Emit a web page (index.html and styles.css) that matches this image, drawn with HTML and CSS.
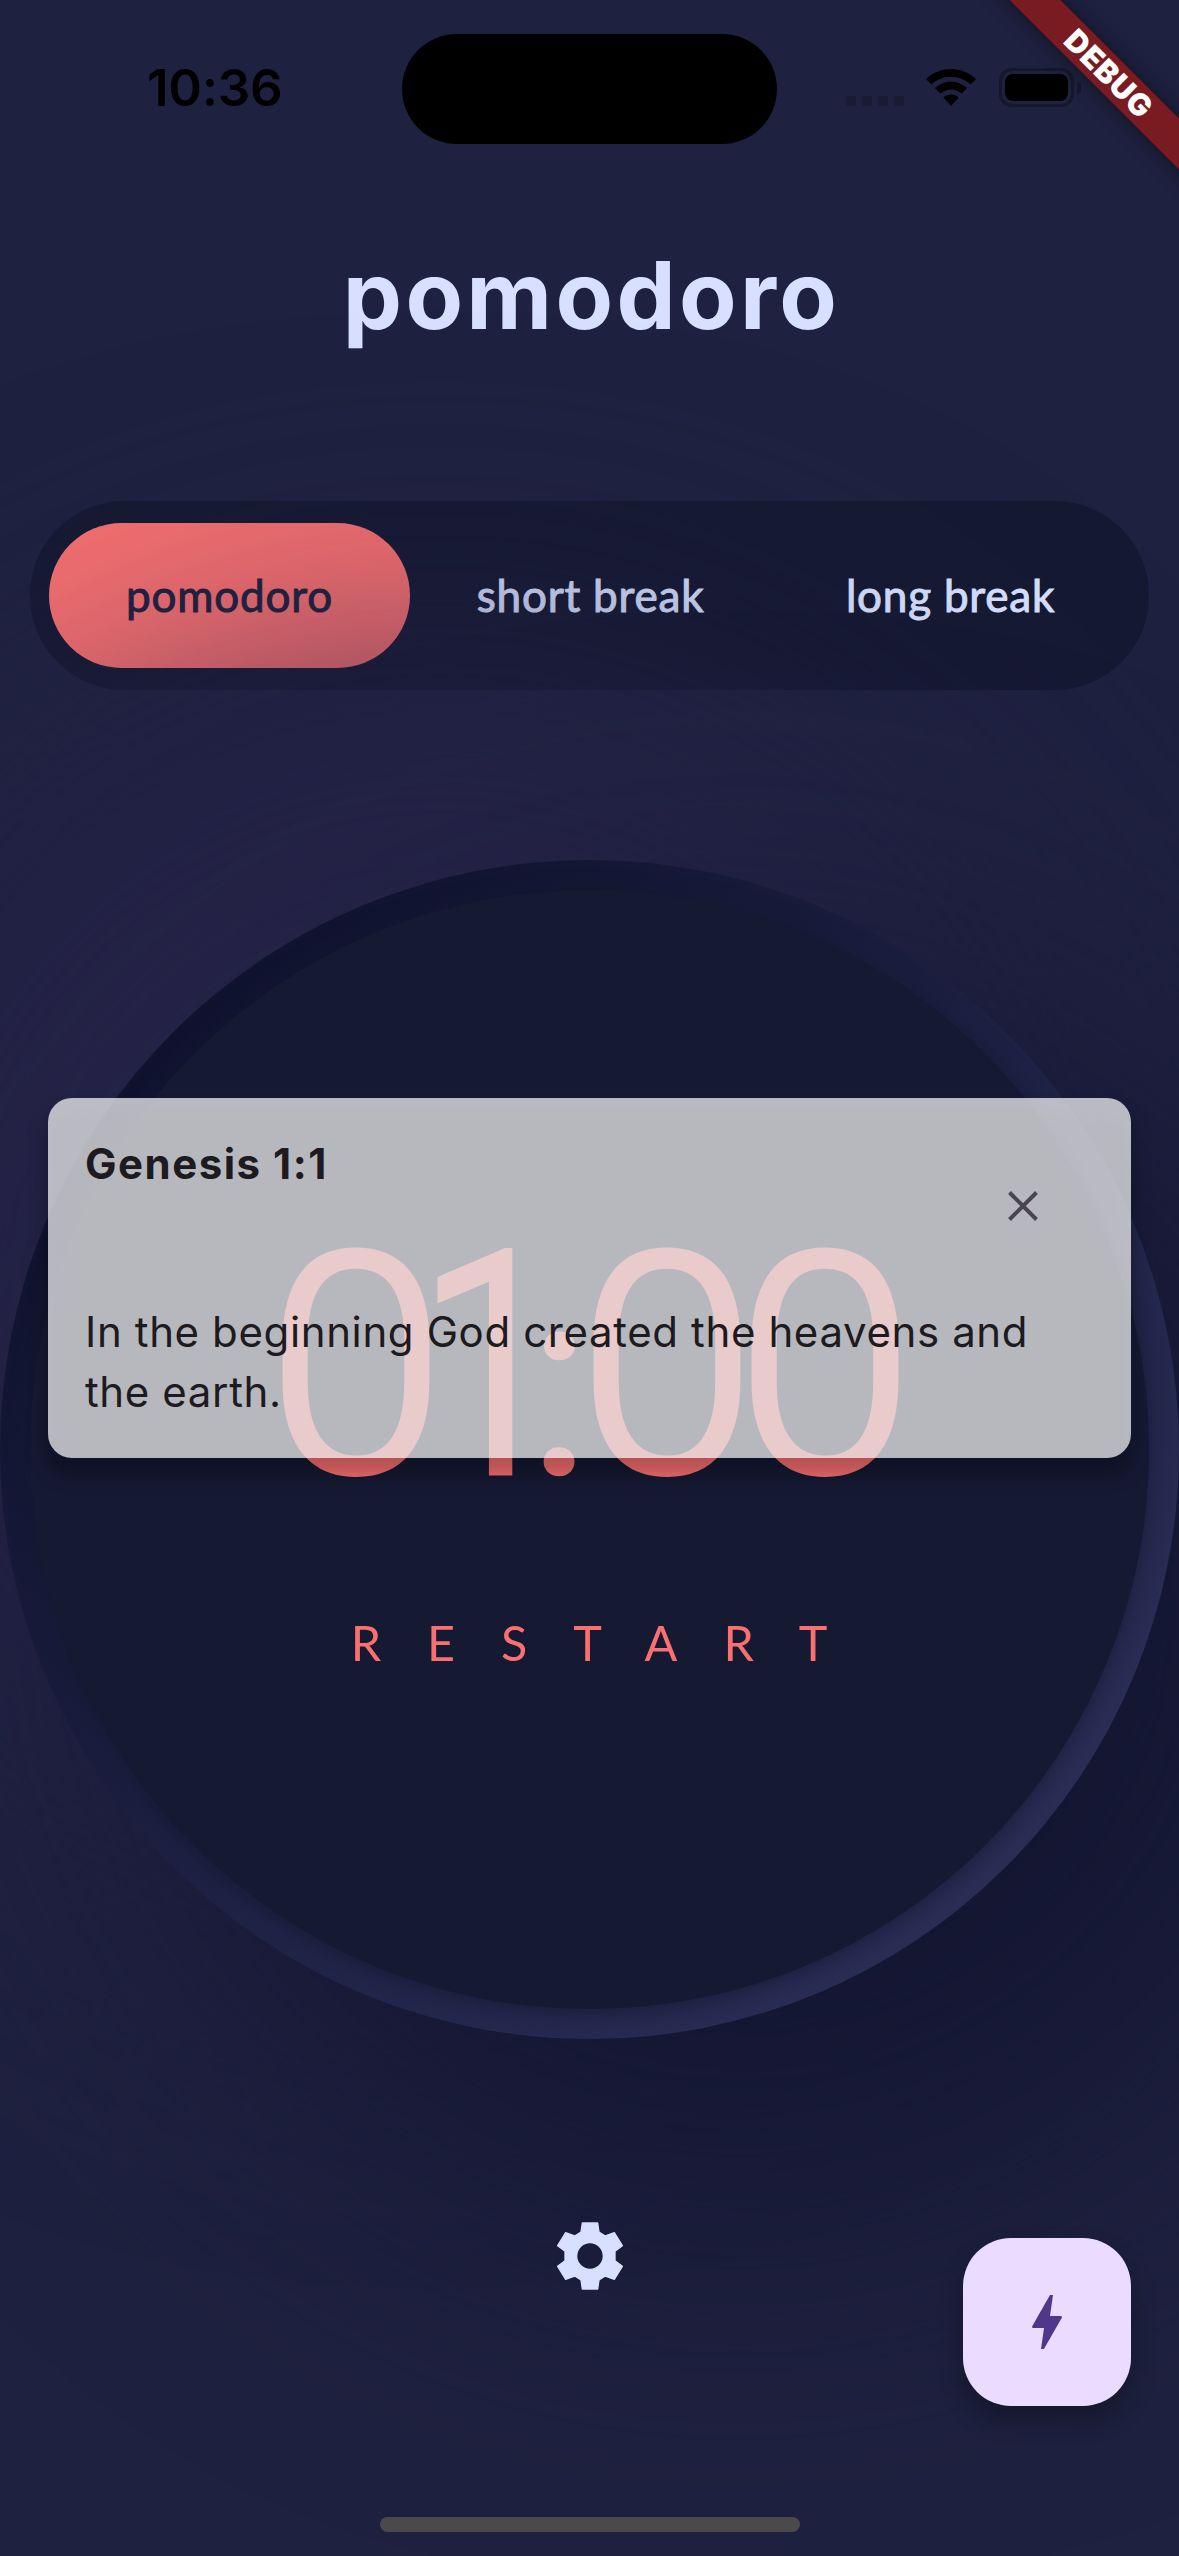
FILE: index.html
```html
<!DOCTYPE html>
<html lang="en">
<head>
<meta charset="utf-8">
<title>pomodoro</title>
<link rel="stylesheet" href="styles.css">
</head>
<body>
<main class="app">
  <header class="status">
    <time class="clock">10:36</time>
    <div class="island"></div>
    <div class="indicators">
      <div class="cell"><i></i><i></i><i></i><i></i></div>
      <svg class="wifi" viewBox="0 0 50 37" width="50" height="37"><path d="M25 0C15.500 0 6.700 3.700 0 10.100L5.400 15.600C10.500 10.800 17.400 7.800 25 7.800S39.500 10.800 44.600 15.600L50 10.100C43.300 3.700 34.500 0 25 0ZM25 12.700C18.800 12.700 13.100 15.200 8.900 19.100L14.300 24.600C17.100 22 20.900 20.400 25 20.400S32.900 22 35.700 24.600L41.100 19.100C36.900 15.200 31.200 12.700 25 12.700ZM25 25.500C22.100 25.500 19.400 26.600 17.400 28.600L25 37L32.600 28.600C30.600 26.600 27.900 25.500 25 25.500Z"/></svg>
      <div class="battery"><div class="level"></div></div><div class="nub"></div>
    </div>
    <div class="ribbon">DEBUG</div>
  </header>

  <h1 class="title">pomodoro</h1>

  <nav class="tabs">
    <button class="tab active">pomodoro</button>
    <button class="tab">short break</button>
    <button class="tab">long break</button>
  </nav>

  <section class="dial">
    <div class="ring">
      <div class="face">
        <div class="time"><span>0</span><span class="one">1</span><span class="colon">:</span><span>0</span><span>0</span></div>
        <div class="restart">RESTART</div>
      </div>
    </div>
  </section>

  <button class="settings" aria-label="Settings">
    <svg viewBox="-102 -102 204 204" width="68" height="68"><path fill-rule="evenodd" d="M-23 -99H23L27 -72L46 -60L73 -70L97 -31L75 -14V14L97 31L73 70L46 60L27 72L23 99H-23L-27 72L-46 60L-73 70L-97 31L-75 14V-14L-97 -31L-73 -70L-46 -60L-27 -72ZM-40 0A40 40 0 1 0 40 0A40 40 0 1 0 -40 0Z"/></svg>
  </button>

  <aside class="verse">
    <div class="verse-head">
      <h2>Genesis 1:1</h2>
      <svg class="close" viewBox="0 0 30 30" width="30" height="30"><path d="M1.500 1.500L28.500 28.500M28.500 1.500L1.500 28.500"/></svg>
    </div>
    <p>In the beginning God created the heavens and the earth.</p>
  </aside>

  <button class="fab" aria-label="New verse">
    <svg viewBox="0 0 24 24" width="72" height="72"><path d="M11 21h-1l1-7H7.500c-.58 0-.57-.32-.38-.66.19-.34.05-.08.07-.12C8.480 10.940 10.420 7.540 13 3h1l-1 7h3.500c.49 0 .56.33.47.51l-.07.15C12.960 17.550 11 21 11 21z"/></svg>
  </button>
  <div class="home"></div>
</main>
</body>
</html>
```
FILE: styles.css
```css
* { box-sizing: border-box; margin: 0; padding: 0; }
body { background: #1e213f; }
button { border: 0; background: none; font: inherit; color: inherit; }
svg { display: block; }

.app {
  position: relative;
  width: 1179px;
  height: 2556px;
  overflow: hidden;
  background: #1e213f;
  display: flex;
  flex-direction: column;
  align-items: center;
  isolation: isolate;
}

/* status bar */
.status {
  width: 100%;
  height: 177px;
  display: grid;
  grid-template-columns: 402px 375px 1fr;
  align-items: start;
}
.clock {
  padding-left: 147px;
  margin-top: 58px;
  font: 600 51px/60px Inter, sans-serif;
  letter-spacing: -0.2px;
  color: #000;
}
.island { height: 110px; margin-top: 34px; border-radius: 55px; background: #000; }
.indicators { display: flex; align-items: center; height: 39px; margin: 68px 0 0 69px; }
.cell { display: flex; gap: 6px; margin-top: 27px; }
.cell i { width: 10px; height: 10px; border-radius: 3px; background: #191b34; }
.wifi { margin-left: 22px; }
.battery {
  margin-left: 23px;
  width: 75px;
  height: 39px;
  padding: 3px;
  border: 3px solid #15172b;
  border-radius: 13px;
}
.level { height: 27px; border-radius: 8px; background: #000; }
.nub { width: 4px; height: 12px; margin-left: 3px; border-radius: 0 4px 4px 0; background: #15172b; }
.ribbon {
  position: absolute;
  z-index: 6;
  left: 957px;
  top: 54px;
  width: 300px;
  height: 36px;
  padding-left: 5px;
  transform: rotate(45deg);
  background: #7a1a21;
  box-shadow: 0 0 18px rgba(0, 0, 0, 0.5);
  font: 900 30.6px/36px Inter, sans-serif;
  letter-spacing: 0.8px;
  text-align: center;
  color: #fff;
}

.title {
  margin-top: 58px;
  padding-left: 4px;
  font: 700 94px/120px Inter, sans-serif;
  letter-spacing: 3.3px;
  color: #d7e0ff;
}

/* mode switcher */
.tabs {
  width: 1119px;
  height: 189px;
  margin-top: 146px;
  padding: 22px 19px;
  border-radius: 95px;
  background: #151932;
  display: grid;
  grid-template-columns: 361px 361px 1fr;
  flex: none;
}
.tab {
  height: 145px;
  padding-bottom: 2px;
  border-radius: 73px;
  font: 400 44px/52px Lato, sans-serif;
  letter-spacing: 0.8px;
  -webkit-text-stroke: 1px currentColor;
  color: #d7e0ff;
}
.tab.active { background: #f87070; color: #1e213f; }

/* timer, with its wide two-tone glow */
.dial {
  position: relative;
  z-index: 1;
  flex: none;
  width: 1179px;
  height: 1179px;
  margin-top: 170px;
}
.dial::before,
.dial::after {
  content: "";
  position: absolute;
  z-index: -1;
  inset: 0;
  border-radius: 50%;
  filter: blur(173px);
}
.dial::before { background: #272449; transform: translate(-150px, -150px); }
.dial::after { background: #121530; transform: translate(150px, 150px); }
.ring {
  height: 100%;
  padding: 30px;
  border-radius: 50%;
  background: linear-gradient(135deg, #0a0d26, #30345e);
}
.face {
  height: 100%;
  border-radius: 50%;
  background: #151932;
  box-shadow: 0 3px 21px rgba(21, 25, 50, 0.85);
  color: #f87070;
  display: flex;
  flex-direction: column;
  align-items: center;
}
.time {
  display: grid;
  grid-template-columns: 150px 92px 73px 142px 174px;
  align-items: baseline;
  height: 362px;
  margin: 296px 0 0 14px;
  font: 300 306px/362px Roboto, sans-serif;
  -webkit-text-stroke: 6px currentColor;
}
.time span { display: flex; justify-content: center; transform: scaleX(1.05); }
.time .one { transform: translateX(15px) scaleX(0.87); -webkit-text-stroke-width: 9px; }
.time .colon { font-size: 257px; -webkit-text-stroke-width: 8px; }
.restart {
  margin-top: 65px;
  padding-left: 45px;
  font: 400 48.500px/58px Lato, sans-serif;
  letter-spacing: 46px;
}

.settings { position: relative; z-index: 2; margin-top: 183px; fill: #d7e0ff; stroke: #d7e0ff; stroke-width: 4; stroke-linejoin: round; }

/* verse card floating over the timer */
.verse {
  position: absolute;
  z-index: 3;
  left: 48px;
  top: 1098px;
  width: 1083px;
  height: 360px;
  padding: 39px 37px;
  color: #1d1b20;
  font: 400 42px/60px Inter, sans-serif;
}
.verse::before,
.verse::after {
  content: "";
  position: absolute;
  z-index: -1;
  border-radius: 24px;
}
.verse::before { inset: 14px -2px -18px; background: rgba(0, 0, 0, 0.26); filter: blur(9px); }
.verse::after { inset: 0; background: rgba(255, 255, 255, 0.7); }
.verse-head { display: flex; justify-content: space-between; height: 165px; }
.verse h2 { margin-top: -3px; font: 700 42px/60px Inter, sans-serif; letter-spacing: 1.5px; }
.close { margin: 54px 56px 0 0; stroke: #49454f; stroke-width: 4; fill: none; }
.verse p { letter-spacing: 0.62px; }

.fab {
  position: absolute;
  z-index: 4;
  left: 963px;
  top: 2238px;
  width: 168px;
  height: 168px;
  border-radius: 48px;
  background: #ebdcff;
  fill: #4f378b;
  display: grid;
  place-items: center;
  box-shadow: 0 14px 24px rgba(0, 0, 0, 0.3);
}
.home { position: absolute; z-index: 5; left: 380px; top: 2517px; width: 420px; height: 15px; border-radius: 8px; background: #4a4a4a; }
```
